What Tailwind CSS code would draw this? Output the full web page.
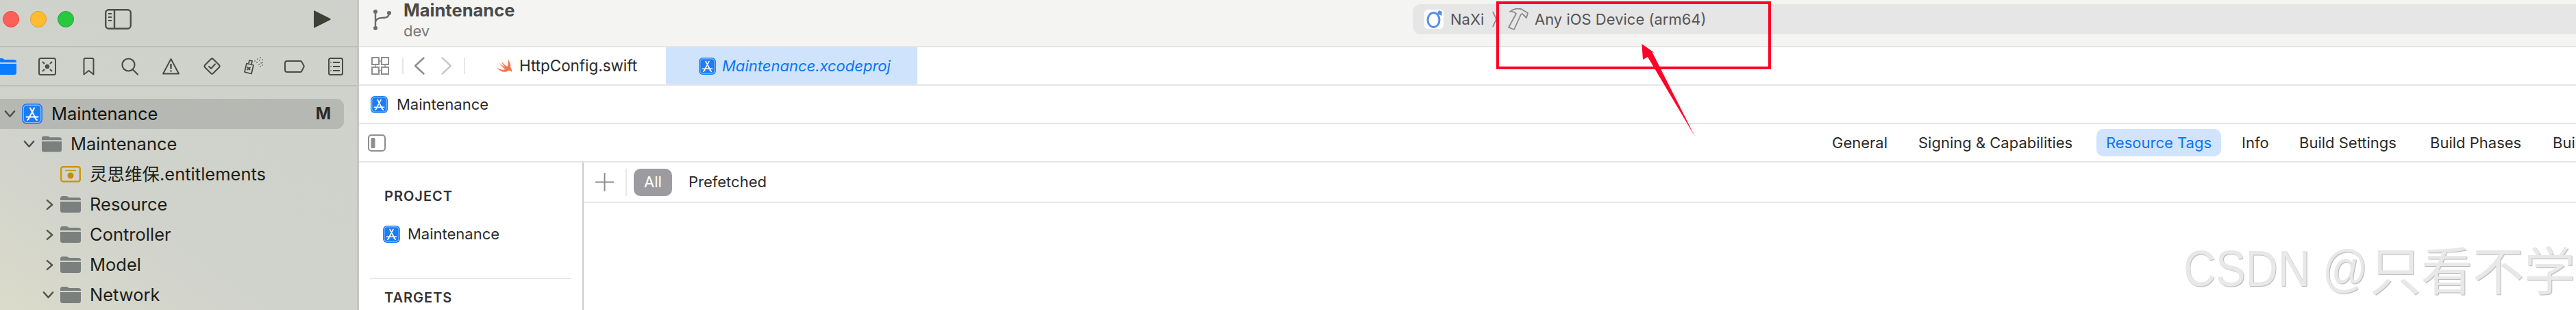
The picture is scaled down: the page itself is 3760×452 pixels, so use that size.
<!doctype html>
<html lang="zh">
<head>
<meta charset="utf-8">
<title>Maintenance</title>
<script src="https://cdn.jsdelivr.net/npm/@tailwindcss/browser@4"></script>
</head>
<body class="m-0 bg-white">
<svg class="absolute w-0 h-0" aria-hidden="true">
  <symbol id="app" viewBox="0 0 30 30">
    <rect width="30" height="30" rx="7" fill="#1b7df5"/>
    <rect x="2.2" y="2.2" width="25.6" height="25.6" rx="5" fill="none" stroke="#cfe2fc" stroke-width="0.9"/>
    <path d="M12 6.5 20.5 22.5M18 6.5 9.5 22.5M6.5 19.5H23.5M8 24l2.5-2M22 24l-2.5-2" fill="none" stroke="#fff" stroke-width="2" stroke-linecap="round"/>
  </symbol>
  <symbol id="folder" viewBox="0 0 30 24">
    <path d="M0 3.5C0 1.5 1.2 0 3 0h6c1.5 0 2.5 1.5 4 2h13.5c2 0 3.5 1.3 3.5 3v1H0z" fill="#7b807e"/>
    <path d="M0 8h30v13c0 1.8-1.4 3-3 3H3c-1.6 0-3-1.2-3-3z" fill="#7b807e"/>
  </symbol>
  <symbol id="bluefolder" viewBox="0 0 30 24">
    <path d="M0 3.5C0 1.5 1.2 0 3 0h6c1.5 0 2.5 1.5 4 2h13.5c2 0 3.5 1.3 3.5 3v1H0z" fill="#0a7aff"/>
    <path d="M0 8h30v13c0 1.8-1.4 3-3 3H3c-1.6 0-3-1.2-3-3z" fill="#0a7aff"/>
  </symbol>
  <symbol id="down" viewBox="0 0 18 12"><path d="M2 2l7 8 7-8" fill="none" stroke="#4f504a" stroke-width="2.6" stroke-linecap="round" stroke-linejoin="round"/></symbol>
  <symbol id="right" viewBox="0 0 12 18"><path d="M2 2l8 7-8 7" fill="none" stroke="#55564f" stroke-width="2.6" stroke-linecap="round" stroke-linejoin="round"/></symbol>
</svg>

<div class="relative flex w-[3760px] h-[452px] overflow-hidden bg-white text-[#2b2b2b] [font-family:Inter,'Noto_Sans_CJK_SC',sans-serif]">

  <!-- Navigator sidebar -->
  <aside class="flex flex-col shrink-0 w-[524px] h-full overflow-hidden border-r-[3px] border-[#c5c6c0] bg-[linear-gradient(35deg,#dadbca_0%,#d0d2cc_35%,#cfd1cc_100%)] text-[#1d1e19] text-[25.5px]">
    <div class="h-[69px] shrink-0 border-b-2 border-[#bcbeb8]">
      <div class="flex items-center h-[32px] mt-[12px] pl-[4px]">
        <span class="w-6 h-6 rounded-full bg-[#ff5f57] border border-[#e5483f]"></span>
        <span class="w-6 h-6 ml-4 rounded-full bg-[#febc2e] border border-[#e0a020]"></span>
        <span class="w-6 h-6 ml-4 rounded-full bg-[#28c840] border border-[#1eaa32]"></span>
        <svg class="ml-[45px]" width="39" height="30" viewBox="0 0 39 30" fill="none" stroke="#4d4e48" stroke-width="2.4"><rect x="1.2" y="1.2" width="36.6" height="27.6" rx="4.5"/><path d="M14 1v28"/><path d="M5 7h5M5 12h5M5 17h5" stroke-width="1.8"/></svg>
        <svg class="ml-auto mr-[38px]" width="25" height="28" viewBox="0 0 25 28"><path d="M1 1.5 24 13c.8.5.8 1.4 0 2L1 26.5c-.5.3-1 0-1-.6V2c0-.6.5-.8 1-.5z" fill="#3e3f36"/></svg>
      </div>
    </div>

    <div class="flex items-center h-[57px] shrink-0 border-b-2 border-[#bcbeb8] -ml-[22px] w-[546px]">
      <div class="flex justify-center w-[61px]"><svg width="30" height="24"><use href="#bluefolder"/></svg></div>
      <div class="flex justify-center w-[60px]"><svg width="26" height="26" viewBox="0 0 26 26" fill="none" stroke="#4a4b45" stroke-width="2"><rect x="1" y="1" width="24" height="24" rx="2.5"/><circle cx="13" cy="13" r="3.2" fill="#4a4b45" stroke="none"/><path d="M6 6l3 3M20 6l-3 3M6 20l3-3M20 20l-3-3"/></svg></div>
      <div class="flex justify-center w-[60px]"><svg width="17" height="26" viewBox="0 0 17 26" fill="none" stroke="#4a4b45" stroke-width="2" stroke-linejoin="round"><path d="M1.5 3c0-1.2.8-2 2-2h10c1.2 0 2 .8 2 2v21.500l-7-5.500-7 5.500z"/></svg></div>
      <div class="flex justify-center w-[60px]"><svg width="25" height="26" viewBox="0 0 25 26" fill="none" stroke="#4a4b45" stroke-width="2.200" stroke-linecap="round"><circle cx="10.500" cy="10.500" r="9"/><path d="M17 17.500l7 7"/></svg></div>
      <div class="flex justify-center w-[60px]"><svg width="25" height="25" viewBox="0 0 25 25" fill="none" stroke="#4a4b45" stroke-width="2" stroke-linejoin="round"><path d="M12.500 2 24 23.500H1z"/><path d="M12.500 9v7.500M12.500 18.500v2" stroke-width="2.400"/></svg></div>
      <div class="flex justify-center w-[61px]"><svg width="27" height="27" viewBox="0 0 27 27" fill="none" stroke="#4a4b45" stroke-width="2" stroke-linejoin="round" stroke-linecap="round"><rect x="5" y="5" width="17" height="17" rx="2.500" transform="rotate(45 13.500 13.500)"/><path d="M9 14l3 3 6-6.500"/></svg></div>
      <div class="flex justify-center w-[59px]"><svg width="30" height="27" viewBox="0 0 30 27" fill="none" stroke="#4a4b45" stroke-width="1.800"><path d="M5 9.500l10 2.500-3 12.500-10-2.500z" stroke-linejoin="round"/><path d="M8 9.500l1-4.500 4 1-1 4.500"/><path d="M6 15l4 4M10.500 15l-5 4"/><path d="M17 6h.1M21 3h.1M25 1h.1M20 8h.1M24 5h.1M28 4h.1M23 11h.1M26 9h.1M28 8h.1M25 14h.1M28 12h.1" stroke-width="1.600" stroke-linecap="round"/></svg></div>
      <div class="flex justify-center w-[61px]"><svg width="30" height="18" viewBox="0 0 30 18" fill="none" stroke="#4a4b45" stroke-width="2"><path d="M4 1h19.500c.7 0 1.300.3 1.600.8l3.400 6c.3.500.3 1.200 0 1.700l-3.400 6.700c-.3.500-.9.800-1.600.8H4c-1.700 0-3-1.300-3-3V4c0-1.700 1.300-3 3-3z"/></svg></div>
      <div class="flex justify-center w-[60px]"><svg width="22" height="26" viewBox="0 0 22 26" fill="none" stroke="#4a4b45" stroke-width="2"><rect x="1" y="1" width="20" height="24" rx="2.500"/><path d="M7 7h10M7 13h10M7 19h10" /><path d="M3.500 7h1M3.500 13h1M3.500 19h1"/></svg></div>
    </div>

    <div class="pt-[18px]">
      <div class="flex items-center h-[44px] w-[502px] rounded-r-[11px] bg-[#b6b8b3] text-[#121310]">
        <svg class="ml-[6px]" width="17" height="12"><use href="#down"/></svg>
        <svg class="ml-[9px]" width="30" height="30"><use href="#app"/></svg>
        <span class="ml-[13px]">Maintenance</span>
        <span class="ml-auto mr-[19px] font-bold text-[24px] text-[#2a2b27]">M</span>
      </div>
      <div class="flex items-center h-[44px]">
        <svg class="ml-[34px]" width="17" height="12"><use href="#down"/></svg>
        <svg class="ml-[10px]" width="29" height="24"><use href="#folder"/></svg>
        <span class="ml-[13px]">Maintenance</span>
      </div>
      <div class="flex items-center h-[44px]">
        <svg class="ml-[88px]" width="30" height="24" viewBox="0 0 30 24" fill="none"><rect x="1.200" y="1.200" width="27.600" height="21.600" rx="3" stroke="#c99a06" stroke-width="2.400"/><path d="M7 6.500h16" stroke="#c99a06" stroke-width="1.500"/><circle cx="15" cy="14" r="4.500" fill="#c48d00"/></svg>
        <span class="ml-[13px]">灵思维保.entitlements</span>
      </div>
      <div class="flex items-center h-[44px]">
        <svg class="ml-[67px]" width="11" height="17"><use href="#right"/></svg>
        <svg class="ml-[10px]" width="30" height="24"><use href="#folder"/></svg>
        <span class="ml-[13px]">Resource</span>
      </div>
      <div class="flex items-center h-[44px]">
        <svg class="ml-[67px]" width="11" height="17"><use href="#right"/></svg>
        <svg class="ml-[10px]" width="30" height="24"><use href="#folder"/></svg>
        <span class="ml-[13px]">Controller</span>
      </div>
      <div class="flex items-center h-[44px]">
        <svg class="ml-[67px]" width="11" height="17"><use href="#right"/></svg>
        <svg class="ml-[10px]" width="30" height="24"><use href="#folder"/></svg>
        <span class="ml-[13px]">Model</span>
      </div>
      <div class="flex items-center h-[44px]">
        <svg class="ml-[62px]" width="17" height="12"><use href="#down"/></svg>
        <svg class="ml-[9px]" width="30" height="24"><use href="#folder"/></svg>
        <span class="ml-[13px]">Network</span>
      </div>
    </div>
  </aside>

  <!-- Editor -->
  <main class="flex flex-col flex-1 min-w-0 text-[22px]">
    <div class="flex items-start h-[69px] shrink-0 border-b-2 border-[#e6e6e6] bg-[#f4f4f2] overflow-hidden">
      <svg class="ml-[20px] mt-[13px] shrink-0" width="28" height="32" viewBox="0 0 28 32" fill="none" stroke="#6c6c6c" stroke-width="2.400"><circle cx="4" cy="4" r="3" fill="#6c6c6c" stroke="none"/><circle cx="24" cy="6" r="3" fill="#6c6c6c" stroke="none"/><circle cx="4" cy="28" r="3" fill="#6c6c6c" stroke="none"/><path d="M4 5v22M4 19c1-4 4-6 10-6 6 0 9-1 10-6"/></svg>
      <div class="flex flex-col ml-[17px] shrink-0">
        <span class="font-bold text-[#4a4a4a] text-[25.500px] leading-[30px]">Maintenance</span>
        <span class="text-[#777777] leading-[30px]">dev</span>
      </div>
      <div class="flex items-center ml-auto mt-[6px] w-[1698px] h-[44px] shrink-0 rounded-l-[12px] bg-[#e6e6e6] text-[#555555]">
        <svg class="ml-[17px] shrink-0" width="28" height="28" viewBox="0 0 28 28" fill="none"><rect width="28" height="28" rx="5" fill="#fff"/><ellipse cx="13.500" cy="15" rx="8.500" ry="10.500" stroke="#5a8eea" stroke-width="3"/><path d="M21 1l5 2-1 6-6-3z" fill="#5a8eea"/></svg>
        <span class="ml-[10px] w-[48px] shrink-0">NaXi</span>
        <svg class="ml-[13px] shrink-0" width="7" height="24" viewBox="0 0 7 24" fill="none" stroke="#888" stroke-width="1.800"><path d="M1 1l5 11-5 11"/></svg>
        <svg class="ml-[15px] shrink-0" width="31" height="32" viewBox="0 0 31 32" fill="none" stroke="#8a8a8a" stroke-width="1.800" stroke-linejoin="round"><path d="M4 5C9 1 15 0 20 1l10 6-2 7-6-6-2 1L10 31l-8-3L13 8C10 5 7 4 4 5z"/></svg>
        <span class="ml-[9px]">Any iOS Device (arm64)</span>
      </div>
    </div>

    <div class="flex items-center h-[56px] shrink-0 border-b-2 border-[#e6e6e6]">
      <svg class="ml-[18px] shrink-0" width="26" height="26" viewBox="0 0 26 26" fill="none" stroke="#8f8f8f" stroke-width="2"><rect x="1" y="1" width="10" height="10"/><rect x="15" y="1" width="10" height="10"/><rect x="1" y="15" width="10" height="10"/><rect x="15" y="15" width="10" height="10"/><path d="M11 6h4M6 11v4M11 20h4M20 11v4" stroke-width="1.400"/></svg>
      <span class="ml-[19px] w-[2px] h-[24px] bg-[#e6e6e6] shrink-0"></span>
      <svg class="ml-[15px] shrink-0" width="16" height="26" viewBox="0 0 16 26" fill="none" stroke="#8c8c8c" stroke-width="2.400" stroke-linecap="round" stroke-linejoin="round"><path d="M14.500 1.500 2 13l12.500 11.500"/></svg>
      <svg class="ml-[24px] shrink-0" width="16" height="26" viewBox="0 0 16 26" fill="none" stroke="#c9c9c9" stroke-width="2.400" stroke-linecap="round" stroke-linejoin="round"><path d="M1.500 1.500 14 13 1.500 24.500"/></svg>
      <span class="ml-[17px] w-[2px] h-[24px] bg-[#e6e6e6] shrink-0"></span>
      <svg class="ml-[46px] shrink-0" width="24" height="21" viewBox="0 0 24 21"><path d="M16 0c3 4 5 8 4 12 1.500 2 2.500 4 2 7-1.500-2-3.500-2.500-5.500-1.500C12 20 5 19 0 12.500c4.500 3 9 4 12.500 2.500C8.500 12 5.500 8.500 3.500 5 6.500 8 10 10.800 12.500 12 10 9.500 8 6.500 6.500 3.500 9.500 6.500 13 9.800 15.500 11.300 17 8 17 4 16 0z" fill="#f8744a"/></svg>
      <span class="ml-[9px] w-[172px] shrink-0 whitespace-nowrap text-[22.400px]">HttpConfig.swift</span>
      <div class="flex items-center ml-[42px] h-full w-[367px] shrink-0 bg-[#cfe3fd] text-[#0a76f5] italic">
        <svg class="ml-[48px] shrink-0" width="25" height="25"><use href="#app"/></svg>
        <span class="ml-[9px] whitespace-nowrap text-[22px]">Maintenance.xcodeproj</span>
      </div>
    </div>

    <div class="flex items-center h-[56px] shrink-0 border-b-2 border-[#e6e6e6]">
      <svg class="ml-[17px] shrink-0" width="25" height="25"><use href="#app"/></svg>
      <span class="ml-[13px]">Maintenance</span>
    </div>

    <div class="flex items-center h-[56px] shrink-0 border-b-2 border-[#e6e6e6] whitespace-nowrap overflow-hidden text-[22px]">
      <svg class="ml-[13px] shrink-0" width="26" height="25" viewBox="0 0 26 25" fill="none"><rect x="1" y="1" width="24" height="23" rx="4" stroke="#8e8e8e" stroke-width="2"/><rect x="4.500" y="5" width="6" height="15" rx="1.500" fill="#8e8e8e"/></svg>
      <span class="ml-[2111px] w-[81px] shrink-0">General</span>
      <span class="ml-[45px] w-[229px] shrink-0">Signing &amp; Capabilities</span>
      <span class="flex items-center justify-center ml-[31px] w-[182px] h-[40px] shrink-0 rounded-[10px] bg-[#d2e4fd] text-[#0a76f5]">Resource Tags</span>
      <span class="ml-[30px] w-[39px] shrink-0">Info</span>
      <span class="ml-[45px] w-[145px] shrink-0">Build Settings</span>
      <span class="ml-[46px] w-[133px] shrink-0">Build Phases</span>
      <span class="ml-[46px] shrink-0">Build Rules</span>
    </div>

    <div class="flex flex-1 min-h-0">
      <div class="flex flex-col w-[328px] shrink-0 border-r-2 border-[#cbcbcb] text-[20px]">
        <span class="mt-[37px] ml-[37px] h-[24px] leading-[24px] font-semibold tracking-[1px] text-[#333333]">PROJECT</span>
        <div class="flex items-center mt-[30px] ml-[35px] h-[26px]">
          <svg width="25" height="25"><use href="#app"/></svg>
          <span class="ml-[11px] text-[22px]">Maintenance</span>
        </div>
        <span class="mt-[51px] mx-[16px] h-[2px] bg-[#e8e8e8]"></span>
        <span class="mt-[15px] ml-[37px] h-[24px] leading-[24px] font-semibold tracking-[1px] text-[#333333]">TARGETS</span>
      </div>
      <div class="flex-1 min-w-0">
        <div class="flex items-center h-[59px] border-b-2 border-[#e8e8e8] text-[22px]">
          <svg class="ml-[17px] shrink-0" width="27" height="27" viewBox="0 0 27 27" fill="none" stroke="#8c8c8c" stroke-width="2"><path d="M13.500 0v27M0 13.500h27"/></svg>
          <span class="ml-[17px] w-[2px] h-[40px] bg-[#e8e8e8]"></span>
          <span class="flex items-center justify-center ml-[10px] w-[56px] h-[40px] rounded-[10px] bg-[#9c9ca0] text-white">All</span>
          <span class="ml-[24px]">Prefetched</span>
        </div>
      </div>
    </div>
  </main>

  <!-- Annotations laid over the screenshot -->
  <div class="absolute left-[2184px] top-[2px] w-[401px] h-[99px] border-4 border-[#ff0029]"></div>
  <svg class="absolute left-0 top-0 pointer-events-none" width="3760" height="452" viewBox="0 0 3760 452"><polygon points="2396.400,64 2415,77.300 2411.600,76 2474,199 2405,83 2398,87" fill="#ff0029"/></svg>

  <!-- Watermark -->
  <div class="absolute left-[3187px] top-[345px] flex items-center h-[92px] whitespace-nowrap text-[75px] leading-[92px] text-[#e8e8e8] [text-shadow:1px_1px_1px_#b5b5b5]">
    <span class="w-[272px] shrink-0 origin-left scale-x-[0.87] [font-family:'Liberation_Sans',sans-serif]">CSDN @</span>
    <span class="[font-family:'Noto_Sans_CJK_SC',sans-serif]">只看不学</span>
  </div>
</div>
</body>
</html>
